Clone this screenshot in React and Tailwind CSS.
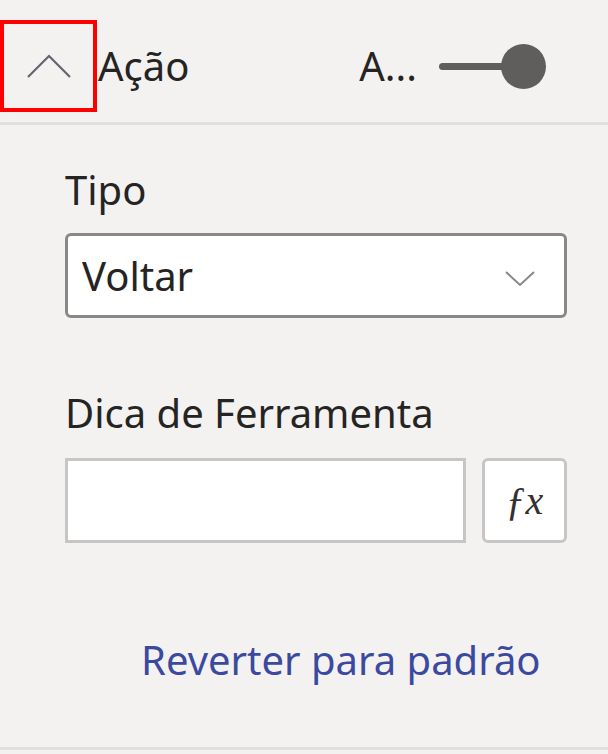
import React from 'react';

const font = { fontFamily: '"Noto Sans", "Open Sans", sans-serif' };

const ChevronUp = () => (
  <svg width="46" height="26" viewBox="0 0 46 26" fill="none">
    <path d="M2 24 L23 3 L44 24" stroke="#66646f" strokeWidth="2.2" />
  </svg>
);

const ChevronDown = () => (
  <svg width="32" height="18" viewBox="0 0 32 18" fill="none">
    <path d="M2 3 L16 16 L30 3" stroke="#8a8886" strokeWidth="2" />
  </svg>
);

export default function App() {
  return (
    <div className="w-[608px] h-[754px] bg-[#f3f2f1] text-[#252423] overflow-hidden flex flex-col" style={font}>
      {/* header */}
      <div className="h-[122px] flex items-center pt-[10px]">
        <div className="w-[97px] h-[92px] border-[4px] border-[#ff0000] flex items-center justify-center">
          <ChevronUp />
        </div>
        <span className="ml-[1px] text-[40px] leading-none">Ação</span>
        <span className="ml-auto text-[40px] leading-none">A...</span>
        <div className="ml-[22px] mr-[62px] flex items-center">
          <div className="w-[66px] h-[7px] bg-[#605e5c] rounded-full" />
          <div className="-ml-[4px] w-[45px] h-[45px] rounded-full bg-[#605e5c]" />
        </div>
      </div>
      <div className="h-[3px] bg-[#e1dfdd]" />

      {/* body */}
      <div className="flex-1 flex flex-col pl-[65px] pr-[41px]">
        <div className="mt-[38px] text-[40px] leading-[54px]">Tipo</div>
        <div className="mt-[16px] h-[85px] border-[3px] border-[#8a8886] rounded-[6px] bg-white flex items-center pl-[14px] pr-[28px]">
          <span className="text-[40px] leading-none">Voltar</span>
          <span className="ml-auto mt-[4px]"><ChevronDown /></span>
        </div>

        <div className="mt-[68px] text-[40px] leading-[54px]">Dica de Ferramenta</div>
        <div className="mt-[18px] flex gap-[16px]">
          <div className="w-[401px] h-[85px] border-[3px] border-[#c8c6c4] bg-white" />
          <div className="w-[85px] h-[85px] border-[3px] border-[#c8c6c4] rounded-[6px] bg-white flex items-center justify-center">
            <span className="text-[40px] italic text-[#323130]" style={{ fontFamily: '"Liberation Serif", serif' }}>ƒx</span>
          </div>
        </div>

        <div className="mt-[90px] pl-[76px] text-[40px] leading-[54px] text-[#3b4a9f]">Reverter para padrão</div>
      </div>
      <div className="h-[3px] bg-[#e1dfdd] mb-[4px]" />
    </div>
  );
}
